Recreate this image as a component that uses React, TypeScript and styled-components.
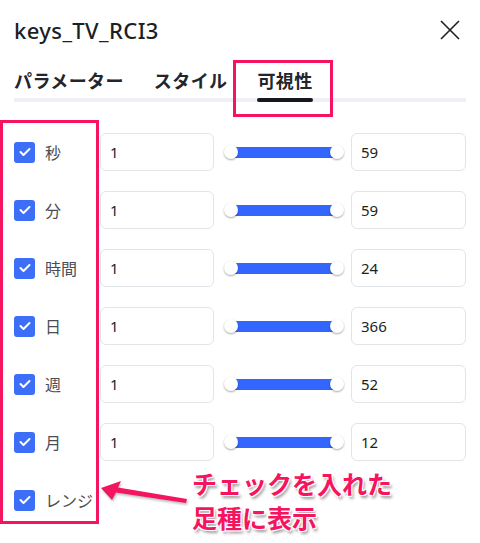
import React from "react";
import { styled, createGlobalStyle } from "styled-components";

const GlobalStyle = createGlobalStyle`
  body {
    margin: 0;
    background: #fff;
    font-family: "Noto Sans", "Noto Sans CJK JP", sans-serif;
    color: #1d1f24;
  }
`;

type RowData = { label: string; min: string; max: string };

const rows: RowData[] = [
  { label: "秒", min: "1", max: "59" },
  { label: "分", min: "1", max: "59" },
  { label: "時間", min: "1", max: "24" },
  { label: "日", min: "1", max: "366" },
  { label: "週", min: "1", max: "52" },
  { label: "月", min: "1", max: "12" },
  { label: "レンジ", min: "", max: "" },
];

const App: React.FC = () => {
  return (
    <Panel>
      <GlobalStyle />
      <Header>
        <Title>keys_TV_RCI3</Title>
        <CloseButton aria-label="close">
          <svg width="20" height="20" viewBox="0 0 20 20">
            <path d="M1 1 L19 19 M19 1 L1 19" stroke="#1d1f24" strokeWidth="1.6" />
          </svg>
        </CloseButton>
      </Header>
      <Tabs>
        <Tab>パラメーター</Tab>
        <Tab>スタイル</Tab>
        <Tab $active>可視性</Tab>
      </Tabs>
      <List>
        {rows.map((r) => (
          <Row key={r.label}>
            <CheckLabel>
              <CheckBox>
                <svg width="12" height="10" viewBox="0 0 12 10">
                  <path d="M1.5 5 L4.5 8 L10.5 2" stroke="#fff" strokeWidth="2" fill="none" strokeLinecap="round" strokeLinejoin="round" />
                </svg>
              </CheckBox>
              <span>{r.label}</span>
            </CheckLabel>
            {r.max && (
              <>
                <Field>{r.min}</Field>
                <SliderCell>
                  <Track>
                    <Thumb $side="left" />
                    <Thumb $side="right" />
                  </Track>
                </SliderCell>
                <Field>{r.max}</Field>
              </>
            )}
          </Row>
        ))}
      </List>

      <TabFrame />
      <ListFrame />
      <Arrow width="100" height="30" viewBox="0 0 100 30">
        <path d="M2 8 L22 1 L19 7.5 L88 19 L87 23 L17 12.5 L13 20 Z" fill="#f5145f" />
      </Arrow>
      <Note>
        チェックを入れた
        <br />
        足種に表示
      </Note>
    </Panel>
  );
};

export default App;

const Panel = styled.div`
  position: relative;
  width: 480px;
  height: 543px;
  overflow: hidden;
`;

const Header = styled.div`
  display: flex;
  align-items: center;
  justify-content: space-between;
  height: 60px;
  padding: 0 20px 0 14px;
`;

const Title = styled.h1`
  margin: 0;
  font-size: 22px;
  font-weight: 500;
  letter-spacing: 0.4px;
`;

const CloseButton = styled.button`
  border: none;
  background: transparent;
  padding: 0;
  width: 20px;
  height: 20px;
  display: flex;
`;

const Tabs = styled.div`
  display: flex;
  gap: 30px;
  margin: 0 14px;
  height: 38px;
  border-bottom: 4px solid #eef0f6;
`;

const Tab = styled.div<{ $active?: boolean }>`
  position: relative;
  font-size: 18px;
  font-weight: ${(p) => (p.$active ? 700 : 600)};
  color: #22252b;
  line-height: 44px;
  margin-top: -1px;
  letter-spacing: 0.4px;

  &::after {
    content: "";
    display: ${(p) => (p.$active ? "block" : "none")};
    position: absolute;
    left: 0;
    right: 0;
    bottom: -4px;
    height: 4px;
    border-radius: 2px;
    background: #14171d;
  }
`;

const List = styled.div`
  display: flex;
  flex-direction: column;
  padding-top: 21px;
`;

const Row = styled.div`
  display: grid;
  grid-template-columns: 86px 114px 137px 115px;
  align-items: center;
  height: 58px;
  padding-left: 14px;
`;

const CheckLabel = styled.label`
  display: flex;
  align-items: center;
  gap: 10px;
  font-size: 16px;
  color: #4a4d53;
`;

const CheckBox = styled.span`
  width: 21px;
  height: 21px;
  border-radius: 3px;
  background: #3d6ef7;
  display: flex;
  align-items: center;
  justify-content: center;
`;

const Field = styled.div`
  box-sizing: border-box;
  height: 38px;
  border: 1px solid #e3e4ea;
  border-radius: 6px;
  padding: 0 9px;
  display: flex;
  align-items: center;
  font-size: 15px;
  font-family: "Noto Sans", sans-serif;
  color: #1d1f24;
`;

const SliderCell = styled.div`
  padding: 0 15px 0 18px;
`;

const Track = styled.div`
  position: relative;
  height: 11px;
  background: #3366ff;
`;

const Thumb = styled.span<{ $side: "left" | "right" }>`
  position: absolute;
  top: 50%;
  ${(p) => p.$side}: -8px;
  width: 14px;
  height: 14px;
  margin-top: -7px;
  border-radius: 50%;
  background: #fff;
  box-shadow: 0 1px 2px rgba(0, 0, 0, 0.35);
`;

const TabFrame = styled.div`
  position: absolute;
  left: 233px;
  top: 60px;
  width: 100px;
  height: 57px;
  box-sizing: border-box;
  border: 3px solid #f5145f;
`;

const ListFrame = styled.div`
  position: absolute;
  left: 0;
  top: 120px;
  width: 99px;
  height: 404px;
  box-sizing: border-box;
  border: 3px solid #f5145f;
`;

const Arrow = styled.svg`
  position: absolute;
  left: 99px;
  top: 480px;
  filter: drop-shadow(1px 2px 1px rgba(0, 0, 0, 0.25));
`;

const Note = styled.div`
  position: absolute;
  left: 192px;
  top: 466px;
  font-size: 25px;
  line-height: 34px;
  font-weight: 700;
  color: #f5145f;
  font-family: "Noto Sans CJK JP", sans-serif;
  text-shadow: -1px -1px 0 #fff, 1px -1px 0 #fff, -1px 1px 0 #fff, 1px 1px 0 #fff,
    2px 3px 3px rgba(0, 0, 0, 0.4);
`;
